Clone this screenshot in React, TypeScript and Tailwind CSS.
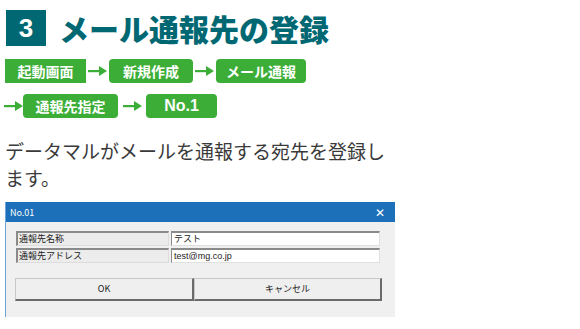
import React from "react";

const jp = { fontFamily: '"Noto Sans CJK JP", "Noto Sans", sans-serif' };

function Arrow() {
  return (
    <svg width="19" height="10" viewBox="0 0 19 10" className="shrink-0">
      <rect x="0" y="4" width="12" height="2.2" fill="#3cae38" />
      <polygon points="11,0 19,5 11,10" fill="#3cae38" />
    </svg>
  );
}

function Step({ children, w, square }: { children: React.ReactNode; w: string; square?: boolean }) {
  return (
    <div
      className={`${w} h-[24px] bg-[#3cae38] text-white font-bold text-[14px] flex items-center justify-center leading-none ${square ? "rounded-none" : "rounded-[4px]"}`}
      style={jp}
    >
      {children}
    </div>
  );
}

export default function App() {
  return (
    <div className="w-[580px] h-[329px] bg-white overflow-hidden relative" style={jp}>
      {/* Title */}
      <div className="flex items-center pt-[10px] pl-[6px]">
        <div className="w-[40px] h-[36px] bg-[#006873] text-white font-bold text-[26px] flex items-center justify-center leading-none" style={{ fontFamily: '"Liberation Sans", Arial, sans-serif' }}>
          3
        </div>
        <div className="ml-[13px] text-[#006873] font-black text-[30px] leading-none">
          メール通報先の登録
        </div>
      </div>

      {/* Breadcrumb row 1 */}
      <div className="flex items-center mt-[13px] pl-[5px]">
        <Step w="w-[81px]" square>起動画面</Step>
        <div className="w-[23px] flex justify-center"><Arrow /></div>
        <Step w="w-[84px]">新規作成</Step>
        <div className="w-[23px] flex justify-center"><Arrow /></div>
        <Step w="w-[90px]">メール通報</Step>
      </div>

      {/* Breadcrumb row 2 */}
      <div className="flex items-center mt-[11px] pl-[4px]">
        <Arrow />
        <Step w="w-[95px]">通報先指定</Step>
        <div className="w-[28px] flex justify-center"><Arrow /></div>
        <Step w="w-[71px]"><span style={{ fontFamily: '"Liberation Sans", Arial, sans-serif' }} className="text-[16px]">No.1</span></Step>
      </div>

      {/* Paragraph */}
      <div className="mt-[19px] pl-[5px] text-[19px] leading-[27px] text-[#3a3a3a] w-[400px]">
        データマルがメールを通報する宛先を登録し<br />ます。
      </div>

      {/* Dialog */}
      <div className="mt-[11px] ml-[5px] w-[390px] h-[115px] bg-[#f0f0f0] border-l border-[#6ea3d8] flex flex-col">
        <div className="h-[20px] bg-[#1c6fb9] flex items-center justify-between px-[4px] text-white">
          <span className="text-[9px] leading-none">No.01</span>
          <span className="text-[12px] leading-none mr-[6px]">✕</span>
        </div>
        <div className="flex flex-col gap-[2px] pt-[9px] pl-[10px]">
          <div className="flex gap-[2px]">
            <div className="w-[153px] h-[15px] bg-[#ececec] border-t-2 border-l-2 border-[#8a8a8a] border-b border-r border-b-[#dcdcdc] border-r-[#dcdcdc] text-[9px] leading-[12px] pl-[1px] text-[#222]">通報先名称</div>
            <div className="w-[209px] h-[15px] bg-white border-t-2 border-l border-[#8a8a8a] border-b border-r border-b-[#e0e0e0] border-r-[#e0e0e0] text-[9px] leading-[12px] pl-[2px] text-[#222]">テスト</div>
          </div>
          <div className="flex gap-[2px]">
            <div className="w-[153px] h-[15px] bg-[#ececec] border-t-2 border-l-2 border-[#8a8a8a] border-b border-r border-b-[#dcdcdc] border-r-[#dcdcdc] text-[9px] leading-[12px] pl-[1px] text-[#222]">通報先アドレス</div>
            <div className="w-[209px] h-[15px] bg-white border-t-2 border-l border-[#8a8a8a] border-b border-r border-b-[#e0e0e0] border-r-[#e0e0e0] text-[9px] leading-[12px] pl-[2px] text-[#222]" style={{ fontFamily: '"Liberation Sans", Arial, sans-serif' }}>test@mg.co.jp</div>
          </div>
        </div>
        <div className="flex pl-[9px] mt-[15px]">
          <div className="w-[179px] h-[23px] bg-[#efefef] border border-t-[#c8c8c8] border-l-[#c8c8c8] border-b-2 border-r-2 border-b-[#6a6a6a] border-r-[#6a6a6a] flex items-center justify-center text-[9px] text-[#222]">OK</div>
          <div className="w-[188px] h-[23px] bg-[#efefef] border border-t-[#c8c8c8] border-l-[#c8c8c8] border-b-2 border-r-2 border-b-[#6a6a6a] border-r-[#6a6a6a] flex items-center justify-center text-[9px] text-[#222]">キャンセル</div>
        </div>
      </div>
    </div>
  );
}
